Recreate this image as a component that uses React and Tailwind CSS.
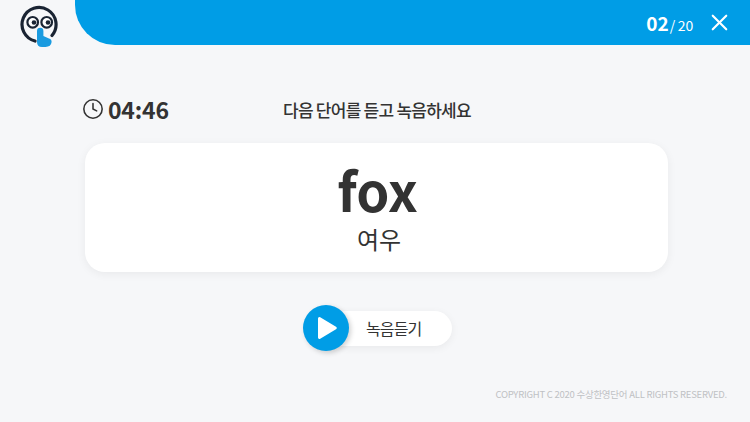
import { Clock, X } from 'lucide-react';

const font = "font-['Noto_Sans_CJK_KR','Noto_Sans',sans-serif]";

const Logo = () => (
  <svg width="40" height="44" viewBox="0 0 40 44" fill="none">
    <path d="M15 36 A17 17 0 1 1 32 30.5" stroke="#1a2433" strokeWidth="3.2" strokeLinecap="round" />
    <circle cx="12.7" cy="17.3" r="5.3" stroke="#1a2433" strokeWidth="2.2" fill="#fff" />
    <circle cx="26.7" cy="17.3" r="5.3" stroke="#1a2433" strokeWidth="2.2" fill="#fff" />
    <circle cx="14" cy="17.5" r="2.3" fill="#1a2433" />
    <circle cx="28" cy="17.5" r="2.3" fill="#1a2433" />
    <path d="M17 26 a3 3 0 0 1 6.4 0 V31 L29 33.5 a3.6 3.6 0 0 1 2.6 3.6 Q31 42 25.5 42 H22 Q17 42 17 37 Z" fill="#1a9be0" />
  </svg>
);

export default function App() {
  return (
    <div className={`${font} w-[750px] h-[422px] bg-[#f6f7f9] flex flex-col overflow-hidden text-[#333]`}>
      {/* 상단 바 */}
      <header className="flex h-[45px] shrink-0">
        <div className="w-[75px] pl-5 pt-[5px]">
          <Logo />
        </div>
        <div className="flex-1 bg-[#009de6] rounded-bl-[40px] flex items-center justify-end pr-[17px] text-white">
          <div className="flex items-baseline mr-[13px]">
            <span className="text-[19px] font-bold leading-none">02</span>
            <span className="text-[14px] leading-none ml-px tracking-[-0.2px]">/ 20</span>
          </div>
          <X size={27} strokeWidth={1.9} />
        </div>
      </header>

      <main className="flex flex-col flex-1 px-[85px]">
        <div className="flex items-center h-[40px] mt-[44px] -ml-[3px]">
          <Clock size={22} strokeWidth={1.7} className="mr-[4px]" />
          <span className="text-[23px] font-bold leading-none tracking-[-0.2px] w-[175px]">04:46</span>
          <span className="text-[17px] font-medium tracking-[-0.75px] leading-none">다음 단어를 듣고 녹음하세요</span>
        </div>

        <div className="mt-[14px] w-[583px] h-[129px] bg-white rounded-[20px] shadow-[0_2px_10px_rgba(0,0,0,0.06)] flex flex-col items-center">
          <div className="text-[53px] font-bold leading-none mt-[20px] ml-[2px]">fox</div>
          <div className="text-[24px] leading-none mt-[11px] ml-[5px]">여우</div>
        </div>

        <div className="mt-[33px] ml-[218px] flex items-center">
          <div className="relative z-10 w-[46px] h-[46px] rounded-full bg-[#009de6] shadow-[2px_2px_5px_rgba(0,0,0,0.18)] flex items-center justify-center">
            <svg width="22" height="24" viewBox="0 0 22 24" className="ml-[2px]">
              <path d="M2 2.5 a1.5 1.5 0 0 1 2.2-1.3 L20 10.7 a1.5 1.5 0 0 1 0 2.6 L4.2 22.8 A1.5 1.5 0 0 1 2 21.5 Z" fill="#fff" />
            </svg>
          </div>
          <div className="-ml-[8px] w-[111px] h-[35px] bg-white rounded-r-full shadow-[0_2px_8px_rgba(0,0,0,0.06)] flex items-center pl-[25px] text-[16px] tracking-[-0.9px]">
            녹음듣기
          </div>
        </div>

        <div className="mt-auto mb-[23px] -mr-[62px] text-right text-[9.5px] tracking-[-0.25px] leading-none text-[#bfc1c4]">
          COPYRIGHT C 2020 수상한영단어 ALL RIGHTS RESERVED.
        </div>
      </main>
    </div>
  );
}
